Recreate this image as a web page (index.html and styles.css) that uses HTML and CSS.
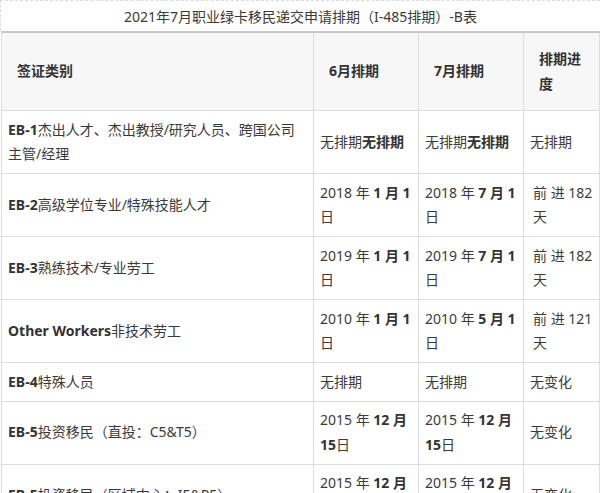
FILE: index.html
```html
<!DOCTYPE html>
<html lang="zh-CN">
<head>
<meta charset="utf-8">
<title>2021年7月职业绿卡移民递交申请排期</title>
<link rel="stylesheet" href="styles.css">
</head>
<body>
<div class="page">
  <div class="title">2021年7月职业绿卡移民递交申请排期（I-485排期）-B表</div>
  <table class="grid">
    <colgroup>
      <col class="c1"><col class="c2"><col class="c3"><col class="c4">
    </colgroup>
    <thead>
      <tr>
        <th>签证类别</th>
        <th>6月排期</th>
        <th>7月排期</th>
        <th>排期进度</th>
      </tr>
    </thead>
    <tbody>
      <tr>
        <td><b>EB-1</b>杰出人才、杰出教授/研究人员、跨国公司主管/经理</td>
        <td>无排期<b>无排期</b></td>
        <td>无排期<b>无排期</b></td>
        <td>无排期</td>
      </tr>
      <tr>
        <td><b>EB-2</b>高级学位专业/特殊技能人才</td>
        <td>2018 年 <b>1 月 1</b>日</td>
        <td>2018 年 <b>7 月 1</b>日</td>
        <td class="adv">前 进 182 天</td>
      </tr>
      <tr>
        <td><b>EB-3</b>熟练技术/专业劳工</td>
        <td>2019 年 <b>1 月 1</b>日</td>
        <td>2019 年 <b>7 月 1</b>日</td>
        <td class="adv">前 进 182 天</td>
      </tr>
      <tr>
        <td><b>Other Workers</b>非技术劳工</td>
        <td>2010 年 <b>1 月 1</b>日</td>
        <td>2010 年 <b>5 月 1</b>日</td>
        <td class="adv">前 进 121 天</td>
      </tr>
      <tr>
        <td><b>EB-4</b>特殊人员</td>
        <td>无排期</td>
        <td>无排期</td>
        <td>无变化</td>
      </tr>
      <tr>
        <td><b>EB-5</b>投资移民（直投：C5&amp;T5）</td>
        <td>2015 年 <b>12 月 15</b>日</td>
        <td>2015 年 <b>12 月 15</b>日</td>
        <td>无变化</td>
      </tr>
      <tr>
        <td><b>EB-5</b>投资移民（区域中心：I5&amp;R5）</td>
        <td>2015 年 <b>12 月 15</b>日</td>
        <td>2015 年 <b>12 月 15</b>日</td>
        <td>无变化</td>
      </tr>
    </tbody>
  </table>
</div>
</body>
</html>
```

FILE: styles.css
```css
html, body {
  margin: 0;
  padding: 0;
  background: #ffffff;
}

body {
  font-family: "Noto Sans", "Noto Sans CJK SC", sans-serif;
  font-size: 14px;
  color: #3a3a3a;
}

.page {
  width: 600px;
  overflow: hidden;
}

.title {
  box-sizing: border-box;
  height: 31px;
  line-height: 31px;
  text-align: center;
  border-top: 1px dashed #dcdcdc;
  border-left: 1px dashed #dcdcdc;
  color: #3a3a3a;
}

.grid {
  margin-left: 1px;
  width: 598px;
  border-collapse: collapse;
  table-layout: fixed;
}

.c1 { width: 312px; }
.c2 { width: 105px; }
.c3 { width: 105px; }
.c4 { width: 76px; }

.grid th,
.grid td {
  border: 1px solid #dddddd;
  vertical-align: middle;
  text-align: left;
  line-height: 24.5px;
}

.grid thead tr {
  border-top: 2px solid #c8c8c8;
}

.grid th {
  background: #f7f7f7;
  font-weight: bold;
  padding: 14px 8px 14px 15px;
  color: #333333;
}

.grid td {
  padding: 6.5px 5px 6.5px 6px;
}

.grid td b {
  font-weight: bold;
  color: #333333;
}

.grid td.adv {
  padding-left: 9px;
}
```
